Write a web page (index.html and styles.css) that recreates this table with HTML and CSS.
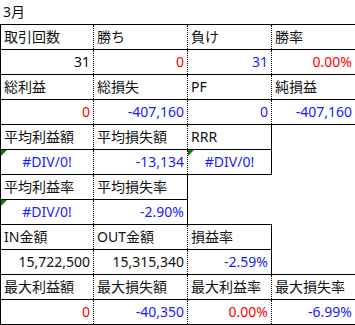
FILE: index.html
```html
<!DOCTYPE html>
<html lang="ja">
<head>
<meta charset="utf-8">
<link rel="stylesheet" href="styles.css">
</head>
<body>
<div class="title">3月</div>
<table class="sheet">
  <colgroup><col class="c1"><col class="c2"><col class="c3"><col class="c4"></colgroup>
  <tr><td class="l first">取引回数</td><td class="l">勝ち</td><td class="l">負け</td><td class="l end">勝率</td></tr>
  <tr><td class="n first">31</td><td class="n red">0</td><td class="n blue">31</td><td class="n red end">0.00%</td></tr>
  <tr><td class="l first">総利益</td><td class="l">総損失</td><td class="l">PF</td><td class="l end">純損益</td></tr>
  <tr><td class="n red first">0</td><td class="n blue">-407,160</td><td class="n blue">0</td><td class="n blue end">-407,160</td></tr>
  <tr><td class="l first">平均利益額</td><td class="l">平均損失額</td><td class="l end">RRR</td><td class="e"></td></tr>
  <tr><td class="err first">#DIV/0!</td><td class="n blue">-13,134</td><td class="err end">#DIV/0!</td><td class="e"></td></tr>
  <tr><td class="l first">平均利益率</td><td class="l end">平均損失率</td><td class="e"></td><td class="e"></td></tr>
  <tr><td class="err first">#DIV/0!</td><td class="n blue end">-2.90%</td><td class="e"></td><td class="e"></td></tr>
  <tr><td class="l first">IN金額</td><td class="l">OUT金額</td><td class="l end">損益率</td><td class="e"></td></tr>
  <tr><td class="n first">15,722,500</td><td class="n">15,315,340</td><td class="n blue end">-2.59%</td><td class="e"></td></tr>
  <tr><td class="l first">最大利益額</td><td class="l">最大損失額</td><td class="l">最大利益率</td><td class="l end">最大損失率</td></tr>
  <tr><td class="n red first">0</td><td class="n blue">-40,350</td><td class="n red">0.00%</td><td class="n blue end">-6.99%</td></tr>
</table>
</body>
</html>
```
FILE: styles.css
```css
html, body {
  margin: 0;
  padding: 0;
  background: #fff;
}
body {
  font-family: "Noto Sans", "Noto Sans CJK JP", sans-serif;
  font-size: 14px;
  color: #111;
}
.title {
  height: 24px;
  line-height: 24px;
  padding-left: 3px;
  font-size: 14px;
}
.sheet {
  border-collapse: collapse;
  table-layout: fixed;
  width: 355px;
}
.c1 { width: 93px; }
.c2 { width: 94px; }
.c3 { width: 84px; }
.c4 { width: 84px; }
.sheet tr { height: 25px; }
.sheet td {
  padding: 0 3px;
  height: 24px;
  line-height: 24px;
  white-space: nowrap;
  overflow: hidden;
  border-top: 1px solid #000;
  border-bottom: 1px solid #000;
  border-left: 1px dotted #000;
  border-right: 1px dotted #000;
  position: relative;
}
.sheet td.first { border-left: 1px solid #000; }
.sheet td.end { border-right: 1px solid #000; }
.sheet td.e { border: none; }
.l { text-align: left; }
.n { text-align: right; }
.red { color: #ff0000; }
.blue { color: #1a1aff; }
.err {
  text-align: center;
  color: #1a1aff;
}
.err::before {
  content: "";
  position: absolute;
  left: 0;
  top: 0;
  border-top: 6px solid #008000;
  border-right: 6px solid transparent;
}
```
